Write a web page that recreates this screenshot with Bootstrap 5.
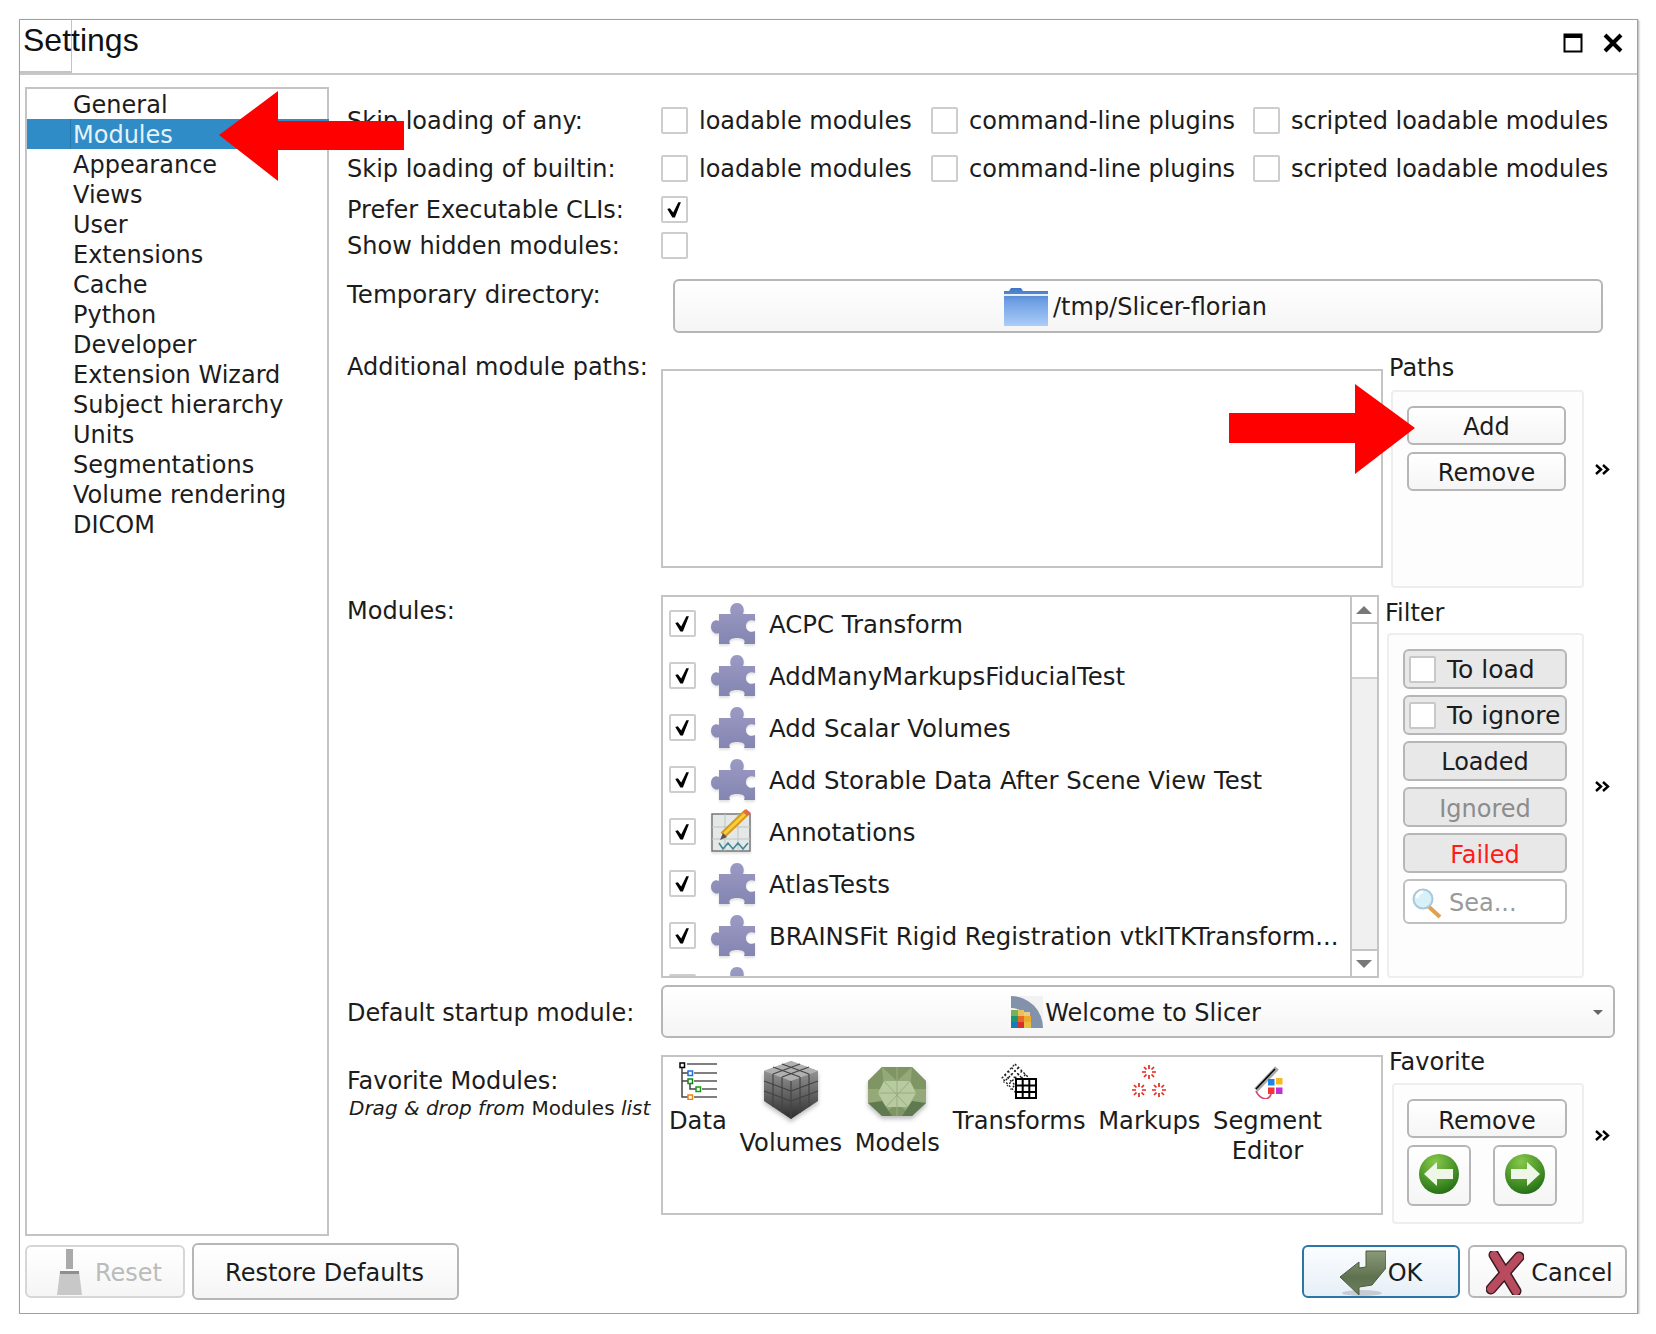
<!DOCTYPE html>
<html lang="en">
<head>
<meta charset="UTF-8">
<title>Settings</title>
<link href="https://cdn.jsdelivr.net/npm/bootstrap@5.3.3/dist/css/bootstrap.min.css" rel="stylesheet">
<style>
body { background: #fff; color: #1c1c1c; font-family: "DejaVu Sans", sans-serif; font-size: 24px; line-height: 28px; }
.dlg { position: relative; width: 1619px; height: 1295px; margin: 19px 0 0 19px; border: 1px solid #a0a0a0; box-shadow: 1px 1px 2px #aaa; }
.dlg-title { position: relative; height: 55px; border-bottom: 2px solid #c8c8c8; padding: 0 14px 0 3px; }
.dlg-title .ttl { font-family: "Liberation Sans", sans-serif; font-size: 32px; line-height: 40px; color: #111; margin-bottom: 14px; }
.ttl-btns { gap: 20px; margin-bottom: 8px; }
.ttl-tab { position: absolute; left: 0; top: 0; width: 52px; height: 53px; border-right: 1px solid #c4c4c4; border-bottom: 2px solid #c4c4c4; }
.dlg-body { padding-left: 5px; height: 1161px; }
.side-tree { width: 304px; height: 1149px; margin-top: 12px; border: 2px solid #c4c4c4; padding: 0; border-radius: 0; flex: none; }
.side-tree .list-group-item { height: 30px; margin-top: 0; padding: 0 0 0 46px; border: 0; background: transparent; color: #1c1c1c; line-height: 32px; font-size: 24px; border-radius: 0; }
.side-tree .list-group-item + .list-group-item.active { margin-top: 0; background: #308cc6; color: #e6f2fa; margin-right: -2px; }
.sel-in { display: block; margin-left: -3px; padding-left: 2px; border-left: 1px solid #2778ab; height: 30px; }
.dlg-main { width: 1290px; margin-left: 18px; flex: none; }
.f-lbl { width: 314px; flex: none; white-space: nowrap; padding-top: 2px; }
.f-wide { font-size: 24.5px; }
.f-a { height: 46px; margin-top: 22px; }
.f-b { height: 46px; margin-top: 2px; }
.f-c { height: 36px; }
.f-e { height: 54px; margin-top: 16px; }
.f-f { height: 236px; margin-top: 18px; }
.f-g { height: 383px; margin-top: 8px; }
.f-h { height: 53px; margin-top: 7px; }
.f-i { height: 177px; margin-top: 9px; }
.opt { width: 270px; gap: 11px; flex: none; }
.opt.wide { width: 322px; }
.opt-t { padding-top: 2px; }
.form-check-input.qchk { width: 27px; height: 27px; margin: 0; border: 2px solid #cdcdcd; border-radius: 2px; background-color: #fff; flex: none; box-shadow: none; }
.form-check-input.qchk:checked { background-color: #fff; border-color: #cdcdcd; background-image: url("data:image/svg+xml,%3Csvg xmlns='http://www.w3.org/2000/svg' viewBox='0 0 27 27'%3E%3Cpath d='M5 13L8 12L12 17L18 5H21L14 23H11Z' fill='%23000'/%3E%3C/svg%3E"); background-size: 100% 100%; }
.btn.qbtn { --bs-btn-padding-x: 0; --bs-btn-padding-y: 0; font-size: 24px; line-height: 28px; color: #1c1c1c; border: 2px solid #b6b6b6; border-radius: 6px; background: linear-gradient(#fff, #f5f5f5); display: flex; align-items: center; justify-content: center; flex: none; padding: 2px 0 0; }
.tmp-btn { margin-left: 12px; width: 930px; height: 54px; gap: 4px; padding-right: 6px !important; }
.path-box { width: 722px; height: 199px; margin-top: 18px; border: 2px solid #c4c4c4; flex: none; }
.sc-lbl { height: 28px; line-height: 30px; }
.grp { border: 2px solid #eeeeee; border-radius: 4px; background: #fdfdfd; flex: none; }
.chev { margin-left: 11px; flex: none; }
.paths-col { margin-left: 6px; margin-top: 2px; }
.paths-grp { width: 193px; height: 198px; margin: 9px 0 0 2px; padding: 14px; gap: 7px; }
.paths-grp .qbtn { width: 159px; height: 39px; }
.mod-box { width: 718px; height: 383px; border: 2px solid #c4c4c4; flex: none; overflow: hidden; }
.mod-rows { width: 687px; flex: none; overflow: hidden; }
.mod-row { height: 52px; padding-left: 6px; flex: none; white-space: nowrap; font-size: 24.4px; }
.mod-row .mod-ic { margin: 0 14px 0 15px; flex: none; filter: drop-shadow(0 2px 1px rgba(0, 0, 0, .12)); }
.mod-t { padding-top: 4px; }
.vbar { width: 28px; border-left: 2px solid #c4c4c4; background: #f0f0f0; flex: none; }
.vbar-btn { height: 27px; background: #fff; border-bottom: 2px solid #c4c4c4; flex: none; padding-right: 3px; }
.vbar-btn.dn { border-bottom: 0; border-top: 2px solid #c4c4c4; }
.vbar-thumb { height: 55px; background: #fff; border-bottom: 2px solid #d0d0d0; flex: none; }
.filter-col { margin-left: 6px; margin-top: 3px; }
.filter-grp { width: 197px; height: 345px; margin-top: 7px; margin-left: 2px; padding: 14px; gap: 6px; }
.filter-grp .qbtn { width: 164px; height: 40px; background: #e8e8e8; }
.filter-grp .qbtn.has-chk { justify-content: flex-start; padding: 0 0 0 4px; gap: 11px; font-size: 25px; }
.filter-grp .qbtn .form-check-input.qchk { border-color: #c8c8c8; }
.txt-dim { color: #8c8c8c !important; padding-top: 4px !important; }
.txt-fail { color: #ff1a1a !important; padding-top: 4px !important; }
.srch { width: 164px; height: 45px; border: 2px solid #c0c0c0; border-radius: 6px; background: #fff; color: #9a9a9a; padding: 2px 0 0 6px; gap: 6px; }
.combo { position: relative; width: 954px; height: 53px; border: 2px solid #b6b6b6; border-radius: 6px; background: linear-gradient(#fff, #f5f5f5); gap: 2px; flex: none; padding-right: 4px; }
.combo-t { padding-top: 2px; }
.combo-caret { position: absolute; right: 10px; top: 23px; }
.fav-lbl { width: 316px; flex: none; margin-top: 18px; white-space: nowrap; padding-top: 2px; }
.fav-sub { font-size: 20px; line-height: 28px; margin: -1px 0 0 2px; }
.fav-box { width: 722px; height: 160px; margin: 8px 0 0 -2px; border: 2px solid #c4c4c4; padding: 4px 0 0 6px; gap: 12.7px; flex: none; }
.fav-item { line-height: 30px; text-align: center; font-size: 24.2px; }
.fav-ic { filter: drop-shadow(0 3px 2px rgba(0, 0, 0, .25)); }
.fav-col { margin-left: 6px; }
.fav-grp { width: 192px; height: 141px; margin: 8px 0 0 3px; padding: 14px 13px; gap: 7px; }
.fav-grp .qbtn.rm { width: 160px; height: 39px; padding-top: 4px; }
.fav-grp .qbtn.ar { width: 64px; height: 61px; padding: 0 0 3px; }
.dlg-foot { padding: 7px 10px 0 5px; }
.foot-l { gap: 7px; }
.foot-r { gap: 8px; }
.btn-reset { width: 160px; height: 53px; padding-left: 8px !important; gap: 12px; color: #bbb !important; border-color: #d6d6d6 !important; }
.btn-restore { width: 267px; height: 57px; padding-right: 2px !important; }
.btn-ok { width: 158px; height: 53px; border-color: #2a76a6 !important; background: linear-gradient(#fbfdff, #e6eff7) !important; gap: 2px; }
.btn-cancel { width: 159px; height: 53px; gap: 7px; padding-left: 4px !important; }
.red-arrow { position: absolute; z-index: 5; }
</style>
</head>
<body>

<svg width="0" height="0" class="position-absolute">
  <defs>
    <linearGradient id="pzl" x1="0" y1="0" x2="0" y2="1"><stop offset="0" stop-color="#9a9ac4"/><stop offset="1" stop-color="#8585b2"/></linearGradient>
    <linearGradient id="fold" x1="0" y1="0" x2="0" y2="1"><stop offset="0" stop-color="#3f74c4"/><stop offset=".35" stop-color="#6f9fe4"/><stop offset="1" stop-color="#abcdf8"/></linearGradient>
    <linearGradient id="okg" x1="0" y1="0" x2="0" y2="1"><stop offset="0" stop-color="#8a9a78"/><stop offset=".6" stop-color="#5f7250"/><stop offset="1" stop-color="#6d7f5e"/></linearGradient>
    <linearGradient id="cubeg" x1="0" y1="0" x2="0" y2="1"><stop offset="0" stop-color="#a8a8a8"/><stop offset="1" stop-color="#2e2e2e"/></linearGradient>
    <radialGradient id="grn" cx=".4" cy=".2" r=".85"><stop offset="0" stop-color="#86c84a"/><stop offset=".7" stop-color="#3f8a22"/><stop offset="1" stop-color="#1f6a14"/></radialGradient>
    <symbol id="i-puzzle" viewBox="0 0 44 44">
      <path d="M8 13H20C18 8 20 2 26 2C32 2 34 8 32 13H44V20C40 18 35 20 35 25C35 30 40 32 44 30V43H33C35 39 32 37 26 37C20 37 17 39 19 43H8V32C4 34 0 30 0 26C0 21 4 18 8 20Z" fill="url(#pzl)"/>
    </symbol>
    <symbol id="i-star" viewBox="-8 -8 16 16">
      <path d="M0-7V-3M0 3V7M-7 0H-3M3 0H7M-5-5L-2.5-2.5M5-5L2.5-2.5M-5 5L-2.5 2.5M5 5L2.5 2.5" stroke="#e8281c" stroke-width="1.7" fill="none"/>
    </symbol>
    <symbol id="i-chev" viewBox="0 0 16 11">
      <path d="M1 1L6 5.500L1 10M8 1L13 5.500L8 10" stroke="#000" stroke-width="2.4" fill="none"/>
    </symbol>
  </defs>
</svg>

<div class="dlg">
  <!-- title bar -->
  <div class="dlg-title d-flex align-items-center justify-content-between">
    <div class="ttl-tab"></div>
    <div class="ttl position-relative">Settings</div>
    <div class="ttl-btns d-flex align-items-center">
      <svg width="20" height="20" viewBox="0 0 20 20"><rect x="1.5" y="1.5" width="17" height="17" fill="none" stroke="#000" stroke-width="2"/><rect x="1" y="1" width="18" height="4" fill="#000"/></svg>
      <svg width="20" height="20" viewBox="0 0 20 20"><path d="M2 2L18 18M18 2L2 18" stroke="#000" stroke-width="4"/></svg>
    </div>
  </div>

  <div class="dlg-body d-flex">
    <!-- page tree -->
    <ul class="list-group side-tree">
      <li class="list-group-item">General</li>
      <li class="list-group-item active"><span class="sel-in">Modules</span></li>
      <li class="list-group-item">Appearance</li>
      <li class="list-group-item">Views</li>
      <li class="list-group-item">User</li>
      <li class="list-group-item">Extensions</li>
      <li class="list-group-item">Cache</li>
      <li class="list-group-item">Python</li>
      <li class="list-group-item">Developer</li>
      <li class="list-group-item">Extension Wizard</li>
      <li class="list-group-item">Subject hierarchy</li>
      <li class="list-group-item">Units</li>
      <li class="list-group-item">Segmentations</li>
      <li class="list-group-item">Volume rendering</li>
      <li class="list-group-item">DICOM</li>
    </ul>

    <div class="dlg-main">
      <div class="f-a d-flex align-items-center">
        <div class="f-lbl">Skip loading of any:</div>
        <label class="opt d-flex align-items-center"><input class="form-check-input qchk" type="checkbox"><span class="opt-t">loadable modules</span></label>
        <label class="opt wide d-flex align-items-center"><input class="form-check-input qchk" type="checkbox"><span class="opt-t">command-line plugins</span></label>
        <label class="opt d-flex align-items-center text-nowrap"><input class="form-check-input qchk" type="checkbox"><span class="opt-t">scripted loadable modules</span></label>
      </div>
      <div class="f-b d-flex align-items-center">
        <div class="f-lbl">Skip loading of builtin:</div>
        <label class="opt d-flex align-items-center"><input class="form-check-input qchk" type="checkbox"><span class="opt-t">loadable modules</span></label>
        <label class="opt wide d-flex align-items-center"><input class="form-check-input qchk" type="checkbox"><span class="opt-t">command-line plugins</span></label>
        <label class="opt d-flex align-items-center text-nowrap"><input class="form-check-input qchk" type="checkbox"><span class="opt-t">scripted loadable modules</span></label>
      </div>
      <div class="f-c d-flex align-items-center">
        <div class="f-lbl">Prefer Executable CLIs:</div>
        <input class="form-check-input qchk" type="checkbox" checked>
      </div>
      <div class="f-c d-flex align-items-center">
        <div class="f-lbl">Show hidden modules:</div>
        <input class="form-check-input qchk" type="checkbox">
      </div>

      <div class="f-e d-flex">
        <div class="f-lbl f-wide">Temporary directory:</div>
        <button type="button" class="btn qbtn tmp-btn">
          <svg width="46" height="39" viewBox="0 0 46 39"><path d="M1 3H6L8 0H18L20 3H45V38H1Z" fill="url(#fold)"/><rect x="1" y="6" width="44" height="2" fill="#e4eefc"/></svg>
          /tmp/Slicer-florian
        </button>
      </div>

      <div class="f-f d-flex align-items-center">
        <div class="f-lbl align-self-start">Additional module paths:</div>
        <div class="path-box align-self-start"></div>
        <div class="paths-col align-self-start">
          <div class="sc-lbl">Paths</div>
          <div class="grp paths-grp d-flex flex-column">
            <button type="button" class="btn qbtn">Add</button>
            <button type="button" class="btn qbtn">Remove</button>
          </div>
        </div>
        <svg class="chev" width="16" height="11"><use href="#i-chev"/></svg>
      </div>

      <div class="f-g d-flex align-items-center">
        <div class="f-lbl align-self-start">Modules:</div>
        <div class="mod-box d-flex align-self-start">
          <div class="mod-rows d-flex flex-column">
            <div class="mod-row d-flex align-items-center"><input class="form-check-input qchk" type="checkbox" checked><svg class="mod-ic" width="44" height="44"><use href="#i-puzzle"/></svg><span class="mod-t">ACPC Transform</span></div>
            <div class="mod-row d-flex align-items-center"><input class="form-check-input qchk" type="checkbox" checked><svg class="mod-ic" width="44" height="44"><use href="#i-puzzle"/></svg><span class="mod-t">AddManyMarkupsFiducialTest</span></div>
            <div class="mod-row d-flex align-items-center"><input class="form-check-input qchk" type="checkbox" checked><svg class="mod-ic" width="44" height="44"><use href="#i-puzzle"/></svg><span class="mod-t">Add Scalar Volumes</span></div>
            <div class="mod-row d-flex align-items-center"><input class="form-check-input qchk" type="checkbox" checked><svg class="mod-ic" width="44" height="44"><use href="#i-puzzle"/></svg><span class="mod-t">Add Storable Data After Scene View Test</span></div>
            <div class="mod-row d-flex align-items-center"><input class="form-check-input qchk" type="checkbox" checked>
              <svg class="mod-ic" width="44" height="44" viewBox="0 0 44 44">
                <rect x="1" y="5" width="38" height="37" fill="#e4e8e6" stroke="#777" stroke-width="1.5"/>
                <path d="M14 5V42M27 5V42M1 18H39M1 30H39" stroke="#bfc5c2" stroke-width="1"/>
                <path d="M12 26L36 3" stroke="#d89a1a" stroke-width="7"/><path d="M13 25L35 4" stroke="#f6cf3a" stroke-width="3"/>
                <path d="M35 0L40 4L36 7L32 3Z" fill="#e06a4a"/><path d="M9 31L12 24L16 28Z" fill="#555"/>
                <path d="M8 34L12 40L17 34L22 40L27 34L32 40L37 34" fill="none" stroke="#3d8a9a" stroke-width="1.6"/>
              </svg><span class="mod-t">Annotations</span></div>
            <div class="mod-row d-flex align-items-center"><input class="form-check-input qchk" type="checkbox" checked><svg class="mod-ic" width="44" height="44"><use href="#i-puzzle"/></svg><span class="mod-t">AtlasTests</span></div>
            <div class="mod-row d-flex align-items-center"><input class="form-check-input qchk" type="checkbox" checked><svg class="mod-ic" width="44" height="44"><use href="#i-puzzle"/></svg><span class="mod-t">BRAINSFit Rigid Registration vtkITKTransform...</span></div>
            <div class="mod-row d-flex align-items-center"><input class="form-check-input qchk" type="checkbox" checked><svg class="mod-ic" width="44" height="44"><use href="#i-puzzle"/></svg></div>
          </div>
          <div class="vbar d-flex flex-column flex-grow-1">
            <div class="vbar-btn d-flex align-items-center justify-content-center"><svg width="16" height="8"><path d="M0 8L8 0L16 8Z" fill="#777"/></svg></div>
            <div class="vbar-thumb"></div>
            <div class="flex-grow-1"></div>
            <div class="vbar-btn dn d-flex align-items-center justify-content-center"><svg width="16" height="8"><path d="M0 0L8 8L16 0Z" fill="#777"/></svg></div>
          </div>
        </div>
        <div class="filter-col align-self-start">
          <div class="sc-lbl">Filter</div>
          <div class="grp filter-grp d-flex flex-column">
            <button type="button" class="btn qbtn has-chk"><input class="form-check-input qchk" type="checkbox"><span class="opt-t">To load</span></button>
            <button type="button" class="btn qbtn has-chk"><input class="form-check-input qchk" type="checkbox"><span class="opt-t">To ignore</span></button>
            <button type="button" class="btn qbtn">Loaded</button>
            <button type="button" class="btn qbtn txt-dim">Ignored</button>
            <button type="button" class="btn qbtn txt-fail">Failed</button>
            <div class="srch d-flex align-items-center">
              <svg width="32" height="32" viewBox="0 0 32 32"><path d="M17 19L29 30" stroke="#e0a050" stroke-width="4"/><circle cx="12" cy="12" r="9.500" fill="#d8f0f8" stroke="#a8c8d8" stroke-width="2"/><path d="M6 11A6 6 0 0 1 12 5" stroke="#fff" stroke-width="3" fill="none"/></svg>
              Sea...
            </div>
          </div>
        </div>
        <svg class="chev" width="16" height="11"><use href="#i-chev"/></svg>
      </div>

      <div class="f-h d-flex align-items-center">
        <div class="f-lbl">Default startup module:</div>
        <div class="combo d-flex align-items-center justify-content-center">
          <svg width="32" height="32" viewBox="0 0 32 32">
            <rect width="32" height="32" fill="#f2f2f2"/>
            <path d="M0 0A32 32 0 0 1 32 32H20A20 20 0 0 0 0 12Z" fill="#8292aa"/>
            <rect y="14" width="7" height="6" fill="#7ab05a"/><rect x="7" y="14" width="6" height="6" fill="#e8c060"/><rect x="13" y="16" width="6" height="4" fill="#e8d080"/>
            <rect y="20" width="7" height="6" fill="#1a9a6a"/><rect x="7" y="20" width="6" height="6" fill="#e86a2a"/><rect x="13" y="20" width="7" height="6" fill="#f0a830"/>
            <rect y="26" width="7" height="6" fill="#1a7ab8"/><rect x="7" y="26" width="6" height="6" fill="#d83030"/><rect x="13" y="26" width="7" height="6" fill="#e8c040"/>
          </svg>
          <span class="combo-t">Welcome to Slicer</span>
          <svg class="combo-caret" width="10" height="5"><path d="M0 0H10L5 5Z" fill="#666"/></svg>
        </div>
      </div>

      <div class="f-i d-flex align-items-center">
        <div class="fav-lbl align-self-start">Favorite Modules:<div class="fav-sub"><em>Drag &amp; drop from</em> Modules <em>list</em></div></div>
        <div class="fav-box d-flex align-self-start">
          <div class="fav-item">
            <svg class="d-block mx-auto" style="margin-top:1px;margin-bottom:6px" width="38" height="38" viewBox="0 0 38 38">
              <path d="M3 3V35H11M3 11H11M3 19H11M11 19V27H19" fill="none" stroke="#444" stroke-width="1.5"/>
              <path d="M8 2H38M15 11H38M15 19H38M23 27H38M15 35H38" stroke="#555" stroke-width="1.7"/>
              <rect x="1" y="1" width="4.500" height="4.500" fill="#fff" stroke="#000" stroke-width="1.5"/>
              <rect x="9" y="9" width="4.500" height="4.500" fill="#fff" stroke="#1a70e0" stroke-width="1.5"/>
              <rect x="9" y="17" width="4.500" height="4.500" fill="#fff" stroke="#108a10" stroke-width="1.5"/>
              <rect x="17" y="25" width="4.500" height="4.500" fill="#fff" stroke="#10a010" stroke-width="1.5"/>
              <rect x="9" y="33" width="4.500" height="4.500" fill="#fff" stroke="#f08010" stroke-width="1.5"/>
            </svg>
            Data
          </div>
          <div class="fav-item">
            <svg class="d-block mx-auto fav-ic" style="margin-bottom:9px" width="56" height="58" viewBox="0 0 56 58">
              <path d="M28 0L55 10V40L28 58L1 40V10Z" fill="url(#cubeg)"/>
              <path d="M1 10L28 20L55 10L28 0Z" fill="#b0b0b0"/>
              <path d="M28 20V58M1 20L28 30L55 20M1 30L28 40L55 30M10 13V46M19 16V52M37 16V52M46 13V46M10 6L37 16M19 3L46 13M46 6L19 16M37 3L10 13" stroke="#444" stroke-width="1.2" fill="none"/>
            </svg>
            Volumes
          </div>
          <div class="fav-item">
            <svg class="d-block mx-auto fav-ic" style="margin-top:6px;margin-bottom:10px" width="58" height="51" viewBox="0 0 58 51">
              <path d="M14 0H44L58 14V36L44 49H14L0 36V14Z" fill="#94a878"/>
              <path d="M14 0H44L29 14ZM0 14L14 0L16 22L0 22ZM58 14L44 0L42 22L58 22ZM14 49L29 36L44 49Z" fill="#7f9664"/>
              <path d="M16 14H42L48 26L40 40H18L10 26Z" fill="#b8caa0"/>
              <path d="M16 14L40 40M42 14L18 40M10 26H48M29 0V49" stroke="#98ac82" stroke-width="1"/>
              <path d="M0 36L14 49H24L14 34ZM58 36L44 49H34L44 34Z" fill="#5f7a50"/>
            </svg>
            Models
          </div>
          <div class="fav-item">
            <svg class="d-block mx-auto" style="margin-top:2px;margin-bottom:7px" width="36" height="36" viewBox="0 0 36 36">
              <path d="M14 1L28 15L15 30L1 15Z" fill="#fff" stroke="#222" stroke-width="1.4" stroke-dasharray="2 2"/>
              <path d="M7 8L22 23M10.500 4.500L25.500 19.500M3.500 11.500L18.500 26.500M21 8L6 23M17.500 4.500L2.500 19.500M24.500 11.500L9.500 26.500" stroke="#222" stroke-width="1.4" stroke-dasharray="2 2"/>
              <rect x="15" y="16" width="20" height="19" fill="#fff" stroke="#000" stroke-width="2"/>
              <path d="M15 22.500H35M15 29H35M21.700 16V35M28.300 16V35" stroke="#000" stroke-width="2"/>
            </svg>
            Transforms
          </div>
          <div class="fav-item">
            <svg class="d-block mx-auto" style="margin-top:2px;margin-bottom:7px" width="36" height="36" viewBox="0 0 36 36">
              <use href="#i-star" x="10" y="1" width="16" height="16"/>
              <use href="#i-star" x="0" y="19" width="16" height="16"/>
              <use href="#i-star" x="20" y="19" width="16" height="16"/>
            </svg>
            Markups
          </div>
          <div class="fav-item">
            <svg class="d-block mx-auto" style="margin-top:2px;margin-bottom:7px" width="36" height="36" viewBox="0 0 36 36">
              <path d="M6 27L27 5" stroke="#aaa" stroke-width="5"/><path d="M6 26L25 6" stroke="#000" stroke-width="1.5"/>
              <path d="M6 28Q9 35 16 36Q20 35 21 31" fill="none" stroke="#d84a70" stroke-width="1.8"/>
              <rect x="18" y="16" width="6.500" height="6.500" fill="#1a84e8"/><rect x="26" y="15" width="6.500" height="6.500" fill="#f8b820"/>
              <rect x="18" y="24.500" width="6.500" height="6.500" fill="#f03838"/><rect x="26" y="24.500" width="6.500" height="6.500" fill="#c030d8"/>
            </svg>
            Segment<br>Editor
          </div>
        </div>
        <div class="fav-col align-self-start">
          <div class="sc-lbl">Favorite</div>
          <div class="grp fav-grp d-flex flex-column">
            <button type="button" class="btn qbtn rm">Remove</button>
            <div class="d-flex" style="gap:22px">
              <button type="button" class="btn qbtn ar">
                <svg width="42" height="42" viewBox="0 0 42 42"><circle cx="21" cy="21" r="20" fill="url(#grn)"/><path d="M6 21L19 9V16H35V26H19V33Z" fill="#eef6e8"/></svg>
              </button>
              <button type="button" class="btn qbtn ar">
                <svg width="42" height="42" viewBox="0 0 42 42"><circle cx="21" cy="21" r="20" fill="url(#grn)"/><path d="M36 21L23 9V16H7V26H23V33Z" fill="#eef6e8"/></svg>
              </button>
            </div>
          </div>
        </div>
        <svg class="chev" width="16" height="11"><use href="#i-chev"/></svg>
      </div>
    </div>
  </div>

  <div class="dlg-foot d-flex justify-content-between align-items-center">
    <div class="foot-l d-flex align-items-center">
      <button type="button" class="btn qbtn btn-reset">
        <svg width="27" height="48" viewBox="0 0 27 48"><rect x="10" y="0" width="7" height="20" fill="#aaa"/><path d="M4 22H23L26 46H1Z" fill="#c8c8c8"/><rect x="4" y="22" width="19" height="3" fill="#8f8f8f"/></svg>
        Reset
      </button>
      <button type="button" class="btn qbtn btn-restore">Restore Defaults</button>
    </div>
    <div class="foot-r d-flex align-items-center">
      <button type="button" class="btn qbtn btn-ok">
        <svg width="46" height="46" viewBox="0 0 46 46"><ellipse cx="22" cy="43" rx="20" ry="3" fill="#c8ccd0"/><path d="M26 1H46V18L32 35L19 37V45L0 27L19 12V18L26 17Z" fill="url(#okg)" stroke="#4a5a40" stroke-width="1"/></svg>
        OK
      </button>
      <button type="button" class="btn qbtn btn-cancel">
        <svg width="38" height="44" viewBox="0 0 38 44"><path d="M8 4L30 40M33 6L5 38" stroke="#3a1a20" stroke-width="11" stroke-linecap="round"/><path d="M8 4L30 40M33 6L5 38" stroke="#b84c5e" stroke-width="8" stroke-linecap="round"/></svg>
        Cancel
      </button>
    </div>
  </div>

  <!-- red callout arrows -->
  <svg class="red-arrow" style="left:199px;top:71px" width="186" height="90" viewBox="0 0 186 90"><path d="M0 44L59 0V30H185V59H59V90Z" fill="#ff0000"/></svg>
  <svg class="red-arrow" style="left:1209px;top:364px" width="187" height="90" viewBox="0 0 187 90"><path d="M0 29H126V0L186 44L126 90V59H0Z" fill="#ff0000"/></svg>
</div>

<script src="https://cdn.jsdelivr.net/npm/bootstrap@5.3.3/dist/js/bootstrap.bundle.min.js"></script>
</body>
</html>
